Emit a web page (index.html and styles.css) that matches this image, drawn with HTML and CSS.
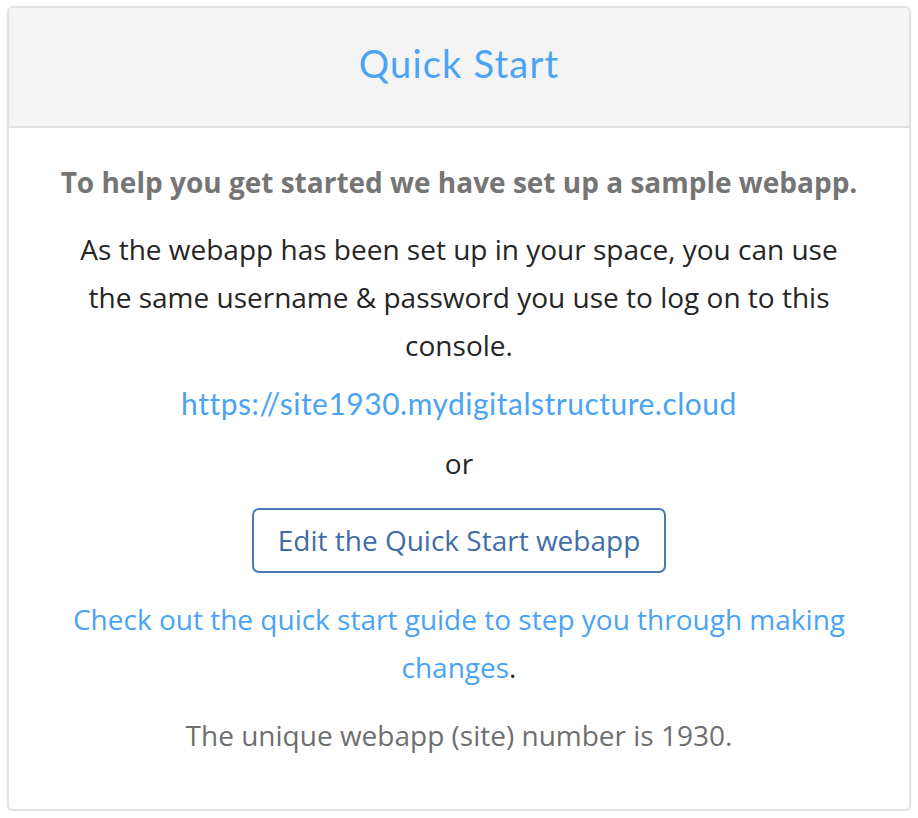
FILE: index.html
```html
<!DOCTYPE html>
<html>
<head>
<meta charset="utf-8">
<link rel="stylesheet" href="styles.css">
</head>
<body>
<div class="card">
  <div class="card-header">
    <h1 class="title">Quick Start</h1>
  </div>
  <div class="card-body">
    <p class="lead">To help you get started we have set up a sample webapp.</p>
    <p class="text">As the webapp has been set up in your space, you can use the same username &amp; password you use to log on to this console.</p>
    <p class="url"><a href="#">https://site1930.mydigitalstructure.cloud</a></p>
    <p class="text or">or</p>
    <div class="btn-row"><a class="btn" href="#">Edit the Quick Start webapp</a></div>
    <p class="text guide"><a href="#">Check out the quick start guide to step you through making changes</a>.</p>
    <p class="note">The unique webapp (site) number is 1930.</p>
  </div>
</div>
</body>
</html>
```
FILE: styles.css
```css
* { box-sizing: border-box; }
html, body { margin: 0; padding: 0; background: #fff; }
body { padding: 6px 7px 0 7px; font-family: "Open Sans", "Noto Sans", sans-serif; }
.card {
  border: 2px solid #e2e2e2;
  border-radius: 6px;
  background: #fff;
  height: 805px;
  overflow: hidden;
  box-shadow: 0 1px 2px rgba(0,0,0,0.08);
}
.card-header {
  background: #f4f4f4;
  border-bottom: 2px solid #e0e0e0;
  height: 120px;
  display: flex;
  align-items: center;
  justify-content: center;
}
.title {
  margin: 0;
  font-family: "Lato", "Open Sans", sans-serif;
  font-weight: 400;
  font-size: 38px;
  letter-spacing: 1.2px;
  color: #4aa3f4;
  line-height: 1;
  padding-bottom: 8px;
}
.card-body {
  padding: 30px 48px 0 48px;
  text-align: center;
}
.card-body p { margin: 0; }
.lead {
  font-weight: 700;
  font-size: 28px;
  color: #757575;
  line-height: 48px;
  margin-bottom: 19px !important;
}
.text {
  font-size: 28px;
  color: #252525;
  line-height: 48px;
}
.url { margin: 10px 0 6px 0 !important; line-height: 48px; }
.url a {
  font-family: "Lato", "DejaVu Sans", sans-serif;
  font-size: 30px;
  color: #4aa3f4;
  text-decoration: none;
  letter-spacing: 0.5px;
}
.or { margin-bottom: 21px !important; }
.btn-row { display: flex; justify-content: center; }
.btn {
  display: inline-block;
  border: 2px solid #4a79ae;
  border-radius: 7px;
  color: #3f6ea6;
  font-size: 28px;
  line-height: 61px;
  padding: 0 24px;
  text-decoration: none;
}
.guide { margin-top: 22px !important; }
.guide a { color: #4aa3f4; text-decoration: none; }
.note {
  font-size: 28px;
  color: #6f6f6f;
  line-height: 48px;
  margin-top: 20px !important;
}
```
